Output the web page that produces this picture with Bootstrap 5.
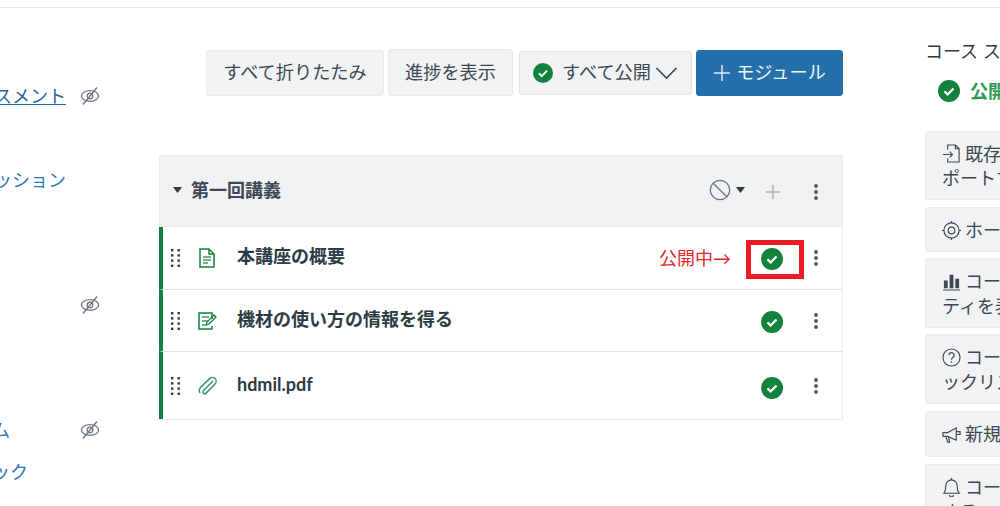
<!DOCTYPE html>
<html lang="ja">

<head>
    <meta charset="UTF-8">
    <title>モジュール</title>
    <link href="https://cdn.jsdelivr.net/npm/bootstrap@5.3.5/dist/css/bootstrap.min.css" rel="stylesheet">
    <style>
        html, body {
            height: 506px;
            overflow: hidden;
        }

        body {
            margin: 0;
            background: #fff;
            font-family: Lato, "Noto Sans CJK JP", sans-serif;
            font-size: 18px;
            color: #2d3b45;
        }

        .top-rule {
            height: 8px;
            border-bottom: 1px solid #e6e7e9;
        }

        .page-row {
            width: 1000px;
            height: 498px;
            overflow: hidden;
        }

        /* Left menu, cut off by the window */
        .side-menu {
            width: 159px;
            flex: none;
            padding-top: 67px;
        }

        .side-row {
            height: 41.75px;
        }

        .side-text {
            width: 66px;
            flex: none;
            overflow: hidden;
            white-space: nowrap;
            padding-top: 2px;
        }

        .side-text a {
            color: #2b78b5;
            text-decoration: none;
            line-height: 1.4;
        }

        .side-text a.current {
            color: #24689f;
            text-decoration: underline;
        }

        .side-text a.pull-left {
            margin-left: -8px;
        }

        .eye-icon {
            margin-left: 14px;
            width: 20px;
            height: 20px;
            flex: none;
        }

        /* Main column */
        .main-col {
            width: 684px;
            flex: none;
        }

        .tool-bar {
            margin-top: 41px;
            margin-bottom: 59px;
            height: 47px;
        }

        .tool-btn {
            background: #f0f2f4;
            border: 1px solid #e6e8eb;
            border-radius: 3px;
            color: #3d4852;
            font-size: 18.2px;
            line-height: 1;
            white-space: nowrap;
            padding: 0;
        }

        .btn-collapse {
            width: 178px;
            height: 46px;
            margin-right: 4px;
        }

        .btn-progress {
            width: 125px;
            height: 47px;
            margin-right: 6px;
        }

        .btn-publish {
            width: 173px;
            height: 44px;
            margin-right: 4px;
            border-width: 1.5px;
            border-color: #dfe2e6;
        }

        .btn-publish .check-icon {
            width: 20px;
            height: 20px;
            margin-right: 9px;
        }

        .btn-module {
            width: 147px;
            height: 46px;
            background: #2570ab;
            border-color: #2570ab;
            color: #f0f5f9;
        }

        .btn-module:hover {
            background: #2570ab;
            color: #f0f5f9;
        }

        .btn-module svg {
            margin-right: 5px;
        }

        .module-box {
            border: 1px solid #e9ebed;
            border-radius: 0;
            height: 265px;
        }

        .module-head {
            height: 72px;
            background: #eff1f3;
            border-bottom: 1px solid #e9ebed;
            border-radius: 0 !important;
            padding: 0 0 2px 13px;
        }

        .module-title {
            font-weight: 700;
            color: #3d4852;
            margin-left: 9px;
        }

        .head-ban {
            margin-left: auto;
        }

        .head-caret {
            margin-left: 5px;
        }

        .head-plus {
            margin: 3px 33px 0 20px;
        }

        .module-head .kebab-icon {
            margin-top: 4px;
        }

        .list-group-item.module-row {
            position: relative;
            border-left: 4px solid #12823d;
            border-radius: 0;
            margin-left: -1px;
            padding: 0 0 0 8px;
        }

        .list-group-item.row-one { height: 63px; }
        .list-group-item.row-two { height: 62px; }
        .list-group-item.row-three { height: 67px; border-bottom: 0; }

        .row-title {
            font-weight: 700;
            color: #2d3b45;
            margin: 0 0 3px 0;
            white-space: nowrap;
        }

        .grip-icon {
            width: 9px;
            height: 18px;
            flex: none;
            margin-right: 17px;
        }

        .kind-icon {
            width: 20px;
            height: 20px;
            flex: none;
            margin-right: 20px;
        }

        .check-icon {
            width: 22px;
            height: 22px;
            flex: none;
        }

        .row-check {
            margin: 3px 31px 0 auto;
        }

        .row-one .row-check { margin-top: 2px; }
        .row-three .row-check { margin-top: 5px; }

        .kebab-icon {
            width: 4px;
            height: 16px;
            flex: none;
            margin-right: 24px;
        }

        .live-note {
            position: absolute;
            left: 496px;
            top: 19px;
            color: #e8252c;
            font-size: 18px;
            line-height: 24px;
            white-space: nowrap;
        }

        .live-frame {
            position: absolute;
            left: 583px;
            top: 13px;
            width: 58px;
            height: 39px;
            border: 5px solid #ed1c24;
        }

        /* Right column, cut off by the window */
        .side-panel {
            margin-left: 82px;
            width: 75px;
            flex: none;
        }

        .panel-title {
            margin: 32px 0 0 0;
            font-size: 18px;
            line-height: 22px;
            font-weight: 400;
            color: #2d3b45;
            white-space: nowrap;
        }

        .panel-state {
            margin: 17px 0 28px 13px;
            color: #2f9a58;
            font-weight: 700;
            height: 24px;
            white-space: nowrap;
        }

        .panel-state .check-icon {
            margin-right: 10px;
        }

        .panel-btn {
            display: block;
            width: 200px;
            text-align: left;
            background: #f0f2f4;
            border: 1px solid #e9ebed;
            border-radius: 3px;
            color: #3d4852;
            font-size: 18px;
            line-height: 24.500px;
            padding: 1px 0 0 16px;
            white-space: nowrap;
            margin-bottom: 7px;
            overflow: hidden;
        }

        .panel-two { height: 70px; }
        .panel-first { height: 69px; }
        .panel-one { height: 46px; }
        .panel-tight { height: 45px; margin-bottom: 6px; }
        .panel-two.panel-tight { height: 70px; }

        .panel-icon {
            width: 19px;
            height: 19px;
            margin: -4px 4px 0 0;
            vertical-align: middle;
        }
    </style>
</head>

<body>
    <svg width="0" height="0" class="d-block">
        <symbol id="ok-mark" viewBox="0 0 22 22">
            <circle cx="11" cy="11" r="11" fill="#12823d"/>
            <path d="M6.5 11.4l3.1 3 5.9-6" fill="none" stroke="#fff" stroke-width="2.2"/>
        </symbol>
        <symbol id="eye-off" viewBox="0 0 20 20">
            <ellipse cx="10" cy="10" rx="8.6" ry="5.4" fill="none" stroke="#6b7680" stroke-width="1.3"/>
            <circle cx="10" cy="10" r="2.8" fill="none" stroke="#6b7680" stroke-width="1.3"/>
            <path d="M17 1.5L3 18.5" stroke="#6b7680" stroke-width="1.3"/>
        </symbol>
        <symbol id="grip" viewBox="0 0 9 18">
            <g fill="#2d3b45">
                <rect x="0" y="0" width="2.400" height="2.400"/><rect x="6.500" y="0" width="2.400" height="2.400"/>
                <rect x="0" y="5.200" width="2.400" height="2.400"/><rect x="6.500" y="5.200" width="2.400" height="2.400"/>
                <rect x="0" y="10.400" width="2.400" height="2.400"/><rect x="6.500" y="10.400" width="2.400" height="2.400"/>
                <rect x="0" y="15.600" width="2.400" height="2.400"/><rect x="6.500" y="15.600" width="2.400" height="2.400"/>
            </g>
        </symbol>
        <symbol id="kebab" viewBox="0 0 4 16">
            <circle cx="2" cy="2" r="1.9" fill="#4a5560"/>
            <circle cx="2" cy="8" r="1.9" fill="#4a5560"/>
            <circle cx="2" cy="14" r="1.9" fill="#4a5560"/>
        </symbol>
    </svg>

    <div class="top-rule"></div>

    <div class="page-row d-flex">
        <!-- Left menu -->
        <nav class="side-menu">
            <div class="side-row d-flex align-items-center">
                <div class="side-text d-flex justify-content-end"><a class="current" href="#">アセスメント</a></div>
                <svg class="eye-icon"><use href="#eye-off"/></svg>
            </div>
            <div class="side-row"></div>
            <div class="side-row d-flex align-items-center">
                <div class="side-text d-flex justify-content-end"><a href="#">ディスカッション</a></div>
            </div>
            <div class="side-row"></div>
            <div class="side-row"></div>
            <div class="side-row d-flex align-items-center">
                <div class="side-text"></div>
                <svg class="eye-icon"><use href="#eye-off"/></svg>
            </div>
            <div class="side-row"></div>
            <div class="side-row"></div>
            <div class="side-row d-flex align-items-center">
                <div class="side-text"><a class="pull-left d-inline-block" href="#">ム</a></div>
                <svg class="eye-icon"><use href="#eye-off"/></svg>
            </div>
            <div class="side-row d-flex align-items-center">
                <div class="side-text"><a class="pull-left d-inline-block" href="#">ック</a></div>
            </div>
        </nav>

        <!-- Modules -->
        <main class="main-col">
            <div class="tool-bar d-flex justify-content-end align-items-center">
                <button type="button" class="btn tool-btn btn-collapse">すべて折りたたみ</button>
                <button type="button" class="btn tool-btn btn-progress">進捗を表示</button>
                <button type="button" class="btn tool-btn btn-publish d-flex align-items-center justify-content-center">
                    <svg class="check-icon"><use href="#ok-mark"/></svg>
                    <span>すべて公開</span>
                    <svg class="ms-1" width="23" height="14" viewBox="0 0 23 14"><path d="M1.5 2l10 10 10-10" fill="none" stroke="#3d4852" stroke-width="1.6"/></svg>
                </button>
                <button type="button" class="btn tool-btn btn-module d-flex align-items-center justify-content-center">
                    <svg width="18" height="18" viewBox="0 0 18 18"><path d="M9 1v16M1 9h16" stroke="#dfeaf3" stroke-width="1.5"/></svg>
                    <span>モジュール</span>
                </button>
            </div>

            <div class="card module-box">
                <div class="card-header module-head d-flex align-items-center">
                    <svg width="9" height="6" viewBox="0 0 9 6"><path d="M0 0h9L4.500 6z" fill="#2d3b45"/></svg>
                    <span class="module-title">第一回講義</span>
                    <svg class="head-ban" width="22" height="22" viewBox="0 0 22 22"><circle cx="11" cy="11" r="9.700" fill="none" stroke="#6b7680" stroke-width="1.3"/><path d="M4.200 4.200l13.600 13.600" stroke="#6b7680" stroke-width="1.3"/></svg>
                    <svg class="head-caret" width="9" height="6" viewBox="0 0 9 6"><path d="M0 0h9L4.500 6z" fill="#2d3b45"/></svg>
                    <svg class="head-plus" width="16" height="16" viewBox="0 0 16 16"><path d="M8 1v14M1 8h14" stroke="#a9b0b6" stroke-width="1.4"/></svg>
                    <svg class="kebab-icon"><use href="#kebab"/></svg>
                </div>
                <ul class="list-group list-group-flush">
                    <li class="list-group-item module-row row-one d-flex align-items-center">
                        <svg class="grip-icon"><use href="#grip"/></svg>
                        <svg class="kind-icon" viewBox="0 0 20 20"><path d="M3 1h9l5 5v13H3z" fill="none" stroke="#12823d" stroke-width="1.500"/><path d="M12 1v5h5" fill="none" stroke="#12823d" stroke-width="1.500"/><path d="M6 9h8M6 12h8M6 15h5" stroke="#4f9470" stroke-width="1.500"/></svg>
                        <span class="row-title">本講座の概要</span>
                        <span class="live-note">公開中→</span>
                        <span class="live-frame"></span>
                        <svg class="check-icon row-check"><use href="#ok-mark"/></svg>
                        <svg class="kebab-icon"><use href="#kebab"/></svg>
                    </li>
                    <li class="list-group-item module-row row-two d-flex align-items-center">
                        <svg class="grip-icon"><use href="#grip"/></svg>
                        <svg class="kind-icon" viewBox="0 0 20 20"><path d="M15 8V2H2v16h13v-3" fill="none" stroke="#12823d" stroke-width="1.500"/><path d="M5 6h7M5 10h6M5 14h3" stroke="#4f9470" stroke-width="1.400"/><path d="M9 14l1-3 7-7 2 2-7 7z" fill="none" stroke="#12823d" stroke-width="1.300"/></svg>
                        <span class="row-title">機材の使い方の情報を得る</span>
                        <svg class="check-icon row-check"><use href="#ok-mark"/></svg>
                        <svg class="kebab-icon"><use href="#kebab"/></svg>
                    </li>
                    <li class="list-group-item module-row row-three d-flex align-items-center">
                        <svg class="grip-icon"><use href="#grip"/></svg>
                        <svg class="kind-icon" viewBox="0 0 20 20"><path d="M16 5L6.500 14.500a1.800 1.800 0 0 0 2.600 2.600L18 8a3.800 3.800 0 0 0-5.400-5.400L3 12a5 5 0 0 0 0 5" fill="none" stroke="#3f9570" stroke-width="1.500"/></svg>
                        <span class="row-title">hdmil.pdf</span>
                        <svg class="check-icon row-check"><use href="#ok-mark"/></svg>
                        <svg class="kebab-icon"><use href="#kebab"/></svg>
                    </li>
                </ul>
            </div>
        </main>

        <!-- Course status panel -->
        <aside class="side-panel">
            <h2 class="panel-title">コース ステータス</h2>
            <div class="panel-state d-flex align-items-center">
                <svg class="check-icon"><use href="#ok-mark"/></svg>
                <span>公開済み</span>
            </div>
            <button type="button" class="btn panel-btn panel-first">
                <svg class="panel-icon" viewBox="0 0 20 20"><path d="M6 6V1h8l4 4v14H6v-4M14 1v4h4M1 11h10M8 8l3 3-3 3" fill="none" stroke="#3d4852" stroke-width="1.200"/></svg>既存のコンテンツをイン<br>ポートする
            </button>
            <button type="button" class="btn panel-btn panel-tight">
                <svg class="panel-icon" viewBox="0 0 20 20"><circle cx="10" cy="10" r="8" fill="none" stroke="#3d4852" stroke-width="1.200"/><circle cx="10" cy="10" r="3.500" fill="none" stroke="#3d4852" stroke-width="1.200"/><path d="M10 0v2M10 18v2M0 10h2M18 10h2" stroke="#3d4852" stroke-width="1.200"/></svg>ホームページを選択
            </button>
            <button type="button" class="btn panel-btn panel-two panel-tight">
                <svg class="panel-icon" viewBox="0 0 20 20"><path d="M2 9h4v8H2zM8 3h4v14H8zM14 7h4v10h-4z" fill="#3d4852"/><path d="M1 19h18" stroke="#3d4852" stroke-width="1.200"/></svg>コースのアクティビ<br>ティを表示
            </button>
            <button type="button" class="btn panel-btn panel-two">
                <svg class="panel-icon" viewBox="0 0 20 20"><circle cx="10" cy="10" r="9" fill="none" stroke="#3d4852" stroke-width="1.200"/><path d="M7.200 7.500a2.800 2.800 0 1 1 4.200 2.500c-1 .6-1.400 1.200-1.400 2.300M10 14v1.500" fill="none" stroke="#3d4852" stroke-width="1.300"/></svg>コースのセットアップチェ<br>ックリスト
            </button>
            <button type="button" class="btn panel-btn panel-one">
                <svg class="panel-icon" viewBox="0 0 20 20"><path d="M1 8h5l9-5v13l-9-4H1zM4 12l2 6h2l-1-5M15 7h4v3h-4" fill="none" stroke="#3d4852" stroke-width="1.200"/></svg>新規アナウンス
            </button>
            <button type="button" class="btn panel-btn panel-two">
                <svg class="panel-icon" viewBox="0 0 20 20"><path d="M2 16c2-2 2-4 2-8a6 6 0 0 1 12 0c0 4 0 6 2 8zM8 18a2 2 0 0 0 4 0M10 0v2" fill="none" stroke="#3d4852" stroke-width="1.200"/></svg>コースの通知を表示<br>する
            </button>
        </aside>
    </div>

    <script src="https://cdn.jsdelivr.net/npm/bootstrap@5.3.5/dist/js/bootstrap.bundle.min.js"></script>
</body>

</html>
